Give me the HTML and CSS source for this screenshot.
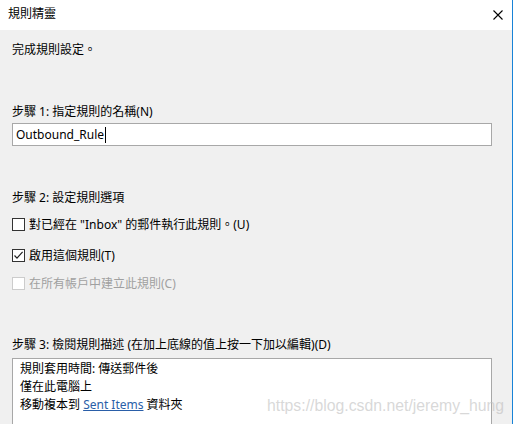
FILE: index.html
```html
<!DOCTYPE html>
<html lang="zh-Hant">
<head>
    <meta charset="UTF-8">
    <meta name="viewport" content="width=device-width, initial-scale=1.0">
    <title>規則精靈</title>
    <link rel="stylesheet" href="styles.css">
</head>
<body>

<div class="wizard">
    <div class="title-bar">
        <span class="title">規則精靈</span>
        <span class="close-button">
            <svg width="10" height="10" viewBox="0 0 10 10">
                <path d="M0.5 0.5 L9.5 9.5 M9.5 0.5 L0.5 9.5" stroke="#000" stroke-width="1.1" fill="none"/>
            </svg>
        </span>
    </div>

    <div class="content">
        <p class="intro">完成規則設定。</p>

        <p class="step step-1">步驟 1: 指定規則的名稱(N)</p>
        <div class="name-box">Outbound_Rule<span class="caret"></span></div>

        <p class="step step-2">步驟 2: 設定規則選項</p>
        <div class="option option-1">
            <span class="check-box"></span>
            <span>對已經在 "Inbox" 的郵件執行此規則。(U)</span>
        </div>
        <div class="option option-2">
            <span class="check-box">
                <svg width="11" height="11" viewBox="0 0 11 11">
                    <path d="M1.5 5.5 L4 8.2 L9.6 1.8" stroke="#222" stroke-width="1.2" fill="none"/>
                </svg>
            </span>
            <span>啟用這個規則(T)</span>
        </div>
        <div class="option option-3 disabled">
            <span class="check-box"></span>
            <span>在所有帳戶中建立此規則(C)</span>
        </div>

        <p class="step step-3">步驟 3: 檢閱規則描述 (在加上底線的值上按一下加以編輯)(D)</p>
        <div class="description">
            <div>規則套用時間: 傳送郵件後</div>
            <div>僅在此電腦上</div>
            <div>移動複本到 <a class="rule-link">Sent Items</a> 資料夾</div>
        </div>
    </div>

    <div class="watermark">https://blog.csdn.net/jeremy_hung</div>
</div>

</body>
</html>
```

FILE: styles.css
```css
html, body {
    margin: 0;
    padding: 0;
}
body {
    width: 513px;
    height: 424px;
    overflow: hidden;
    background: #f0f0f0;
    font-family: "Noto Sans", "Noto Sans CJK TC", sans-serif;
    font-size: 12px;
    color: #000;
}
.wizard {
    position: relative;
    height: 424px;
    border-right: 1px solid #1883d7;
    box-sizing: border-box;
    overflow: hidden;
}
.title-bar {
    display: flex;
    justify-content: space-between;
    align-items: center;
    height: 30px;
    background: #fff;
    padding: 0 9px 0 8px;
}
.title {
    line-height: 16px;
    margin-top: -2px;
}
.close-button {
    display: flex;
    margin-top: -1px;
}
.content {
    padding: 12px 20px 0 12px;
}
p {
    margin: 0;
    line-height: 16px;
}
.step-1 {
    margin-top: 46px;
}
.name-box {
    display: flex;
    align-items: center;
    margin-top: 3px;
    height: 23px;
    border: 1px solid #a8a8a8;
    background: #fff;
    padding-left: 3px;
    box-sizing: border-box;
}
.caret {
    display: inline-block;
    width: 1px;
    height: 16px;
    background: #000;
    margin-left: 1px;
}
.step-2 {
    margin-top: 44px;
}
.option {
    display: flex;
    align-items: center;
    height: 16px;
    gap: 4px;
}
.option-1 {
    margin-top: 10px;
}
.option-2 {
    margin-top: 15px;
}
.option-3 {
    margin-top: 12px;
}
.check-box {
    display: flex;
    align-items: center;
    justify-content: center;
    width: 13px;
    height: 13px;
    border: 1px solid #333;
    background: #fff;
    box-sizing: border-box;
}
.disabled {
    color: #a0a0a0;
}
.disabled .check-box {
    border-color: #cccccc;
}
.step-3 {
    margin-top: 46px;
}
.description {
    margin-top: 5px;
    height: 90px;
    border: 1px solid #a8a8a8;
    border-bottom: none;
    background: #fff;
    padding: 1px 0 0 7px;
    line-height: 18px;
}
.rule-link {
    color: #2a5ea8;
    text-decoration: underline;
}
.watermark {
    position: absolute;
    left: 267px;
    top: 397px;
    font-family: "Liberation Sans", Arial, sans-serif;
    font-size: 15.8px;
    color: rgba(190, 190, 190, 0.6);
    white-space: nowrap;
}
```
